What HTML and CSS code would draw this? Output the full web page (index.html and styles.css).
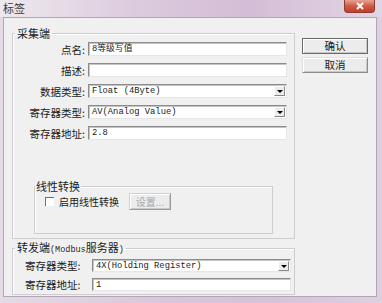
FILE: index.html
```html
<html>
    <head>
        <link rel="stylesheet" href="styles.css">
    </head>
    <body>
        <div class="window">
            <div class="titleBar">
                <span class="title">标签</span>
                <div class="closeBtn">
                    <svg width="10" height="8" viewBox="0 0 10 8">
                        <path d="M2 1 L8 7 M8 1 L2 7" stroke="#fff" stroke-width="2"/>
                    </svg>
                </div>
            </div>
            <div class="client">
                <div class="groups">
                    <fieldset class="group collect">
                        <legend>采集端</legend>
                        <div class="form">
                            <label>点名:</label>
                            <div class="field">8等级写值</div>
                            <label>描述:</label>
                            <div class="field"></div>
                            <label>数据类型:</label>
                            <div class="field combo">Float (4Byte)<span class="arrow"></span></div>
                            <label>寄存器类型:</label>
                            <div class="field combo">AV(Analog Value)<span class="arrow"></span></div>
                            <label>寄存器地址:</label>
                            <div class="field">2.8</div>
                        </div>
                        <fieldset class="group linear">
                            <legend>线性转换</legend>
                            <div class="checkRow">
                                <span class="check"></span>
                                <span class="checkLabel">启用线性转换</span>
                                <button class="btn disabled">设置...</button>
                            </div>
                        </fieldset>
                    </fieldset>
                    <fieldset class="group forward">
                        <legend>转发端<span class="ascii">(Modbus</span>服务器<span class="ascii">)</span></legend>
                        <div class="form small">
                            <label>寄存器类型:</label>
                            <div class="field combo">4X(Holding Register)<span class="arrow"></span></div>
                            <label>寄存器地址:</label>
                            <div class="field">1</div>
                        </div>
                    </fieldset>
                </div>
                <div class="side">
                    <button class="btn big default">确认</button>
                    <button class="btn big">取消</button>
                </div>
            </div>
        </div>
    </body>
</html>
```

FILE: styles.css
```css
body{
    margin: 0;
    font-family: "Noto Sans CJK SC", "Noto Sans", sans-serif;
    font-size: 10.5px;
    color: #1a1a1a;
}
.window{
    width: 382px;
    height: 303px;
    display: flex;
    flex-direction: column;
    background: linear-gradient(90deg, #e4dbe5 0%, #d8c6da 45%, #d6c2d9 70%, #ddd0e0 100%);
}
.titleBar{
    height: 17px;
    display: flex;
    justify-content: space-between;
    align-items: flex-start;
    background: linear-gradient(90deg, #eee9ee 0%, #dccbde 35%, #d4bdd6 65%, #e2d5e4 100%);
}
.title{
    margin: 2px 0 0 3px;
    font-size: 11px;
    line-height: 12px;
    color: #3a3a3a;
}
.closeBtn{
    width: 29px;
    height: 12px;
    margin-right: 7px;
    border: 1px solid #8e3a30;
    border-top: none;
    border-radius: 0 0 4px 4px;
    background: linear-gradient(#e9a293, #cf5a45 50%, #bf3f2b);
    display: flex;
    justify-content: center;
    align-items: center;
}
.client{
    flex: 1;
    margin: 0 5px 6px 3px;
    border: 1px solid #b3a5b6;
    background: #f0f0f0;
    display: flex;
    padding: 9px 0 0 8px;
}
.group{
    margin: 0;
    padding: 0;
    border: 1px solid #cdcdcd;
    box-shadow: inset 1px 1px 0 #fff;
    box-sizing: border-box;
}
.group legend{
    padding: 0 2px;
    margin-left: 2px;
    font-size: 11px;
    line-height: 12px;
}
.group legend .ascii{
    font-family: "Liberation Mono", monospace;
    font-size: 8.5px;
}
.collect{
    width: 283px;
    padding: 3px 0 4px 0;
}
.form{
    display: grid;
    grid-template-columns: 72px 199px;
    grid-auto-rows: 14px;
    column-gap: 3px;
    row-gap: 7px;
    align-items: center;
}
.form label{
    text-align: right;
    white-space: nowrap;
}
.form.small{
    grid-template-columns: 64px 199px;
    grid-auto-rows: 13px;
    row-gap: 6px;
    padding-left: 12px;
}
.form.small label{
    text-align: left;
}
.field{
    height: 100%;
    box-sizing: border-box;
    background: #fff;
    border: 1px solid;
    border-color: #8c8c8c #e6e6e6 #e6e6e6 #8c8c8c;
    box-shadow: inset 1px 1px 0 #c4c4c4;
    font-family: "Liberation Mono", "Noto Sans CJK SC", monospace;
    font-size: 8.8px;
    line-height: 12px;
    padding-left: 3px;
    display: flex;
    align-items: center;
    position: relative;
}
.combo .arrow{
    position: absolute;
    right: 1px;
    top: 1px;
    width: 11px;
    height: 10px;
    box-sizing: border-box;
    background: #ececec;
    border: 1px solid;
    border-color: #fff #888 #888 #fff;
}
.combo .arrow:after{
    content: "";
    position: absolute;
    left: 2px;
    top: 3px;
    border-left: 3px solid transparent;
    border-right: 3px solid transparent;
    border-top: 3px solid #000;
}
.linear{
    width: 239px;
    margin: 40px 0 0 21px;
    padding: 1px 0 23px 0;
}
.linear legend{
    margin-left: 0;
    padding: 0 1px;
}
.checkRow{
    display: flex;
    align-items: center;
    height: 17px;
    margin-left: 10px;
}
.check{
    width: 9px;
    height: 9px;
    box-sizing: border-box;
    background: #fff;
    border-top: 1px solid #6e6e6e;
    border-left: 1px solid #6e6e6e;
    margin-right: 5px;
}
.checkLabel{
    font-size: 10px;
    margin-right: 10px;
}
.btn{
    font-family: "Noto Sans CJK SC", sans-serif;
    font-size: 10px;
    background: #ececec;
    border: 1px solid #a8a8a8;
    box-shadow: inset 1px 1px 0 #fff, inset -1px -1px 0 #c8c8c8;
    padding: 0;
    color: #1a1a1a;
}
.btn.disabled{
    width: 42px;
    height: 17px;
    color: #a8a8a8;
    border-color: #d0d0d0 #9a9a9a #9a9a9a #d0d0d0;
}
.forward{
    width: 283px;
    margin-top: 2px;
    padding: 3px 0 3px 0;
}
.side{
    display: flex;
    flex-direction: column;
    gap: 3px;
    margin: 11px 0 0 7px;
}
.btn.big{
    width: 66px;
    height: 16px;
    font-size: 10.5px;
    line-height: 12px;
    border-color: #e0e0e0 #8c8c8c #8c8c8c #e0e0e0;
}
.btn.default{
    border: 1px solid #6a6a6a;
}
```
